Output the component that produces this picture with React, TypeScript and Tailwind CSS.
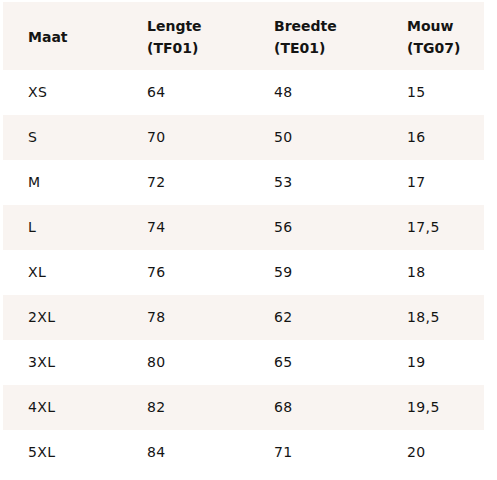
import React from "react";

const rows: [string, string, string, string][] = [
  ["XS", "64", "48", "15"],
  ["S", "70", "50", "16"],
  ["M", "72", "53", "17"],
  ["L", "74", "56", "17,5"],
  ["XL", "76", "59", "18"],
  ["2XL", "78", "62", "18,5"],
  ["3XL", "80", "65", "19"],
  ["4XL", "82", "68", "19,5"],
  ["5XL", "84", "71", "20"],
];

export default function App() {
  return (
    <div className="bg-white w-[497px] h-[480px] pt-[2px] pl-[3px]" style={{ fontFamily: "'DejaVu Sans', sans-serif" }}>
      <table className="w-[481px] border-collapse text-[14px] text-[#141414]">
        <colgroup>
          <col className="w-[119px]" />
          <col className="w-[127px]" />
          <col className="w-[133px]" />
          <col className="w-[102px]" />
        </colgroup>
        <thead>
          <tr className="bg-[#f9f4f1] h-[68px] leading-[22px]">
            <th className="text-left pl-[25px] font-bold pt-[2px]">Maat</th>
            <th className="text-left pl-[25px] font-bold pt-[2px]">Lengte<br />(TF01)</th>
            <th className="text-left pl-[25px] font-bold pt-[2px]">Breedte<br />(TE01)</th>
            <th className="text-left pl-[25px] font-bold pt-[2px]">Mouw<br />(TG07)</th>
          </tr>
        </thead>
        <tbody>
          {rows.map((r, i) => (
            <tr key={r[0]} className={`h-[45px] ${i % 2 === 1 ? "bg-[#f9f4f1]" : "bg-white"}`}>
              {r.map((c, j) => (
                <td key={j} className="pl-[25px] align-middle tracking-[0.4px]">{c}</td>
              ))}
            </tr>
          ))}
        </tbody>
      </table>
    </div>
  );
}
